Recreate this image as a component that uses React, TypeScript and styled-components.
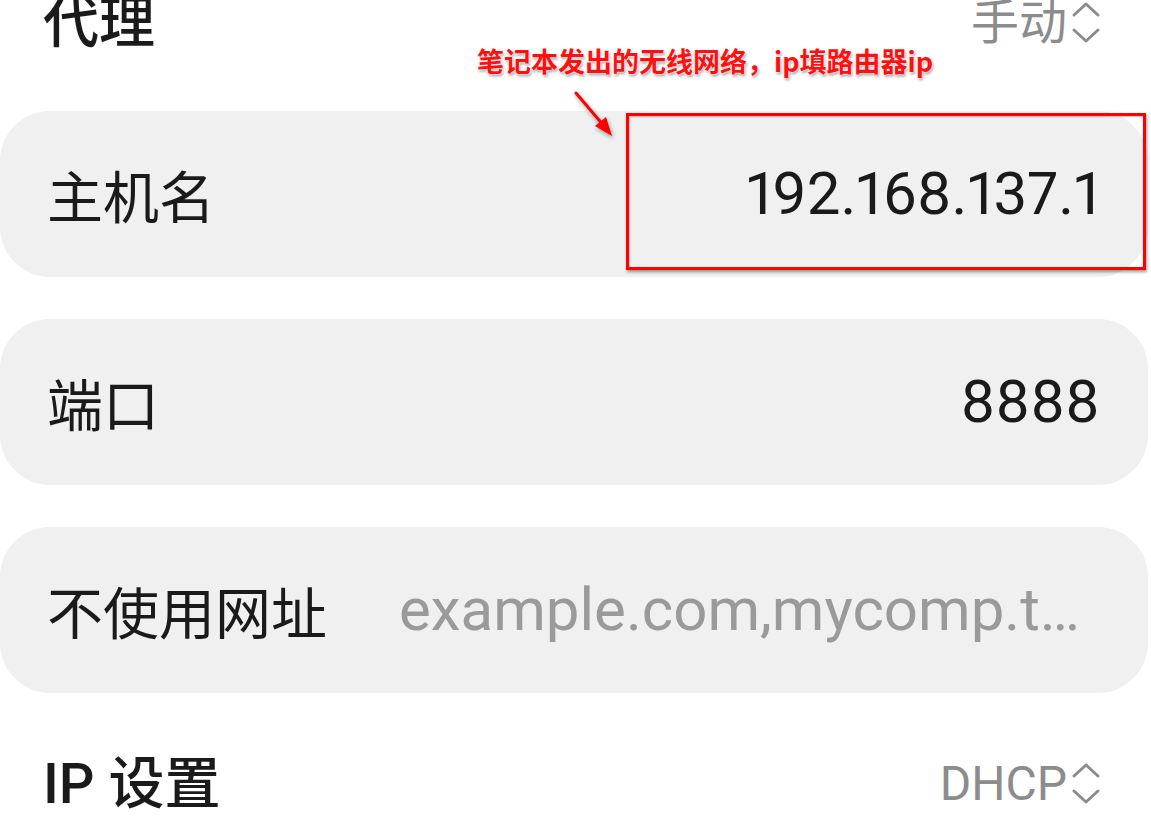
import React from "react";
import styled, { createGlobalStyle } from "styled-components";

const Global = createGlobalStyle`
  html, body { margin: 0; padding: 0; background: #ffffff; }
  body { font-family: Roboto, "Noto Sans CJK SC", sans-serif; overflow: hidden; }
`;

const Page = styled.div`
  position: relative;
  width: 1151px;
  height: 840px;
  overflow: hidden;
  display: flex;
  flex-direction: column;
`;

const SectionRow = styled.div<{ $top: number; $bottom: number }>`
  display: flex;
  align-items: center;
  justify-content: space-between;
  height: 56px;
  margin-top: ${(p) => p.$top}px;
  margin-bottom: ${(p) => p.$bottom}px;
  padding: 0 50px 0 43px;
`;

const SectionTitle = styled.div`
  font-family: Roboto, "Noto Sans CJK SC", sans-serif;
  font-size: 56px;
  font-weight: 500;
  line-height: 56px;
  color: #1a1a1a;
`;

const Picker = styled.div`
  display: flex;
  align-items: center;
  gap: 4px;
  font-family: Roboto, "Noto Sans CJK SC", sans-serif;
  font-size: 48px;
  line-height: 56px;
  color: #8c8c8c;
`;

const Cards = styled.div`
  display: flex;
  flex-direction: column;
  gap: 42px;
`;

const Card = styled.div`
  width: 1148px;
  height: 166px;
  box-sizing: border-box;
  border-radius: 50px;
  background: #f0f0f0;
  display: flex;
  align-items: center;
  justify-content: space-between;
  padding: 0 48px 0 47px;
  gap: 72px;
`;

const Label = styled.div`
  font-family: "Noto Sans CJK SC", sans-serif;
  font-size: 56px;
  line-height: 1;
  color: #1a1a1a;
  white-space: nowrap;
  flex-shrink: 0;
`;

const Value = styled.div<{ $placeholder?: boolean }>`
  font-family: Roboto, "Noto Sans CJK SC", sans-serif;
  font-size: 60px;
  line-height: 1.2;
  color: ${(p) => (p.$placeholder ? "#9a9a9a" : "#1a1a1a")};
  font-variant-numeric: proportional-nums;
  font-feature-settings: "pnum" 1;
  white-space: nowrap;
  overflow: hidden;
  text-overflow: ellipsis;
  min-width: 0;
`;

const Callout = styled.div`
  position: absolute;
  left: 477px;
  top: 43px;
  font-family: "Noto Sans CJK SC", sans-serif;
  font-size: 27px;
  font-weight: 700;
  line-height: 36px;
  color: #ff1010;
  white-space: nowrap;
  text-shadow: 0 0 2px #fff, 0 0 3px #fff, 1px 2px 3px rgba(0, 0, 0, 0.45);
`;

const Highlight = styled.div`
  position: absolute;
  left: 626px;
  top: 113px;
  width: 520px;
  height: 157px;
  box-sizing: border-box;
  border: 3px solid #ff0000;
  box-shadow: 1px 2px 3px rgba(0, 0, 0, 0.4), inset 1px 1px 2px rgba(0, 0, 0, 0.25);
`;

const ArrowSvg = styled.svg`
  position: absolute;
  left: 570px;
  top: 88px;
  filter: drop-shadow(1px 2px 2px rgba(0, 0, 0, 0.4));
`;

const Chevrons = () => (
  <svg width="30" height="44" viewBox="0 0 30 44" fill="none" stroke="#8c8c8c" strokeWidth="3" strokeLinecap="round" strokeLinejoin="round">
    <polyline points="3,14 15,3 27,14" />
    <polyline points="3,29 15,40 27,29" />
  </svg>
);

export default function App() {
  return (
    <>
      <Global />
      <Page>
        <SectionRow $top={-5} $bottom={60}>
          <SectionTitle>代理</SectionTitle>
          <Picker>
            <span>手动</span>
            <Chevrons />
          </Picker>
        </SectionRow>
        <Cards>
          <Card>
            <Label>主机名</Label>
            <Value>192.168.137.1</Value>
          </Card>
          <Card>
            <Label>端口</Label>
            <Value>8888</Value>
          </Card>
          <Card>
            <Label>不使用网址</Label>
            <Value $placeholder>example.com,mycomp.test.com,localhost</Value>
          </Card>
        </Cards>
        <SectionRow $top={63} $bottom={0}>
          <SectionTitle>IP 设置</SectionTitle>
          <Picker>
            <span>DHCP</span>
            <Chevrons />
          </Picker>
        </SectionRow>
        <Callout>笔记本发出的无线网络，ip填路由器ip</Callout>
        <ArrowSvg width="50" height="52" viewBox="0 0 50 52">
          <line x1="6" y1="5" x2="34" y2="38" stroke="#ff0000" strokeWidth="3" strokeLinecap="round" />
          <polygon points="42,48 25,38 36,29" fill="#ff0000" />
        </ArrowSvg>
        <Highlight />
      </Page>
    </>
  );
}
